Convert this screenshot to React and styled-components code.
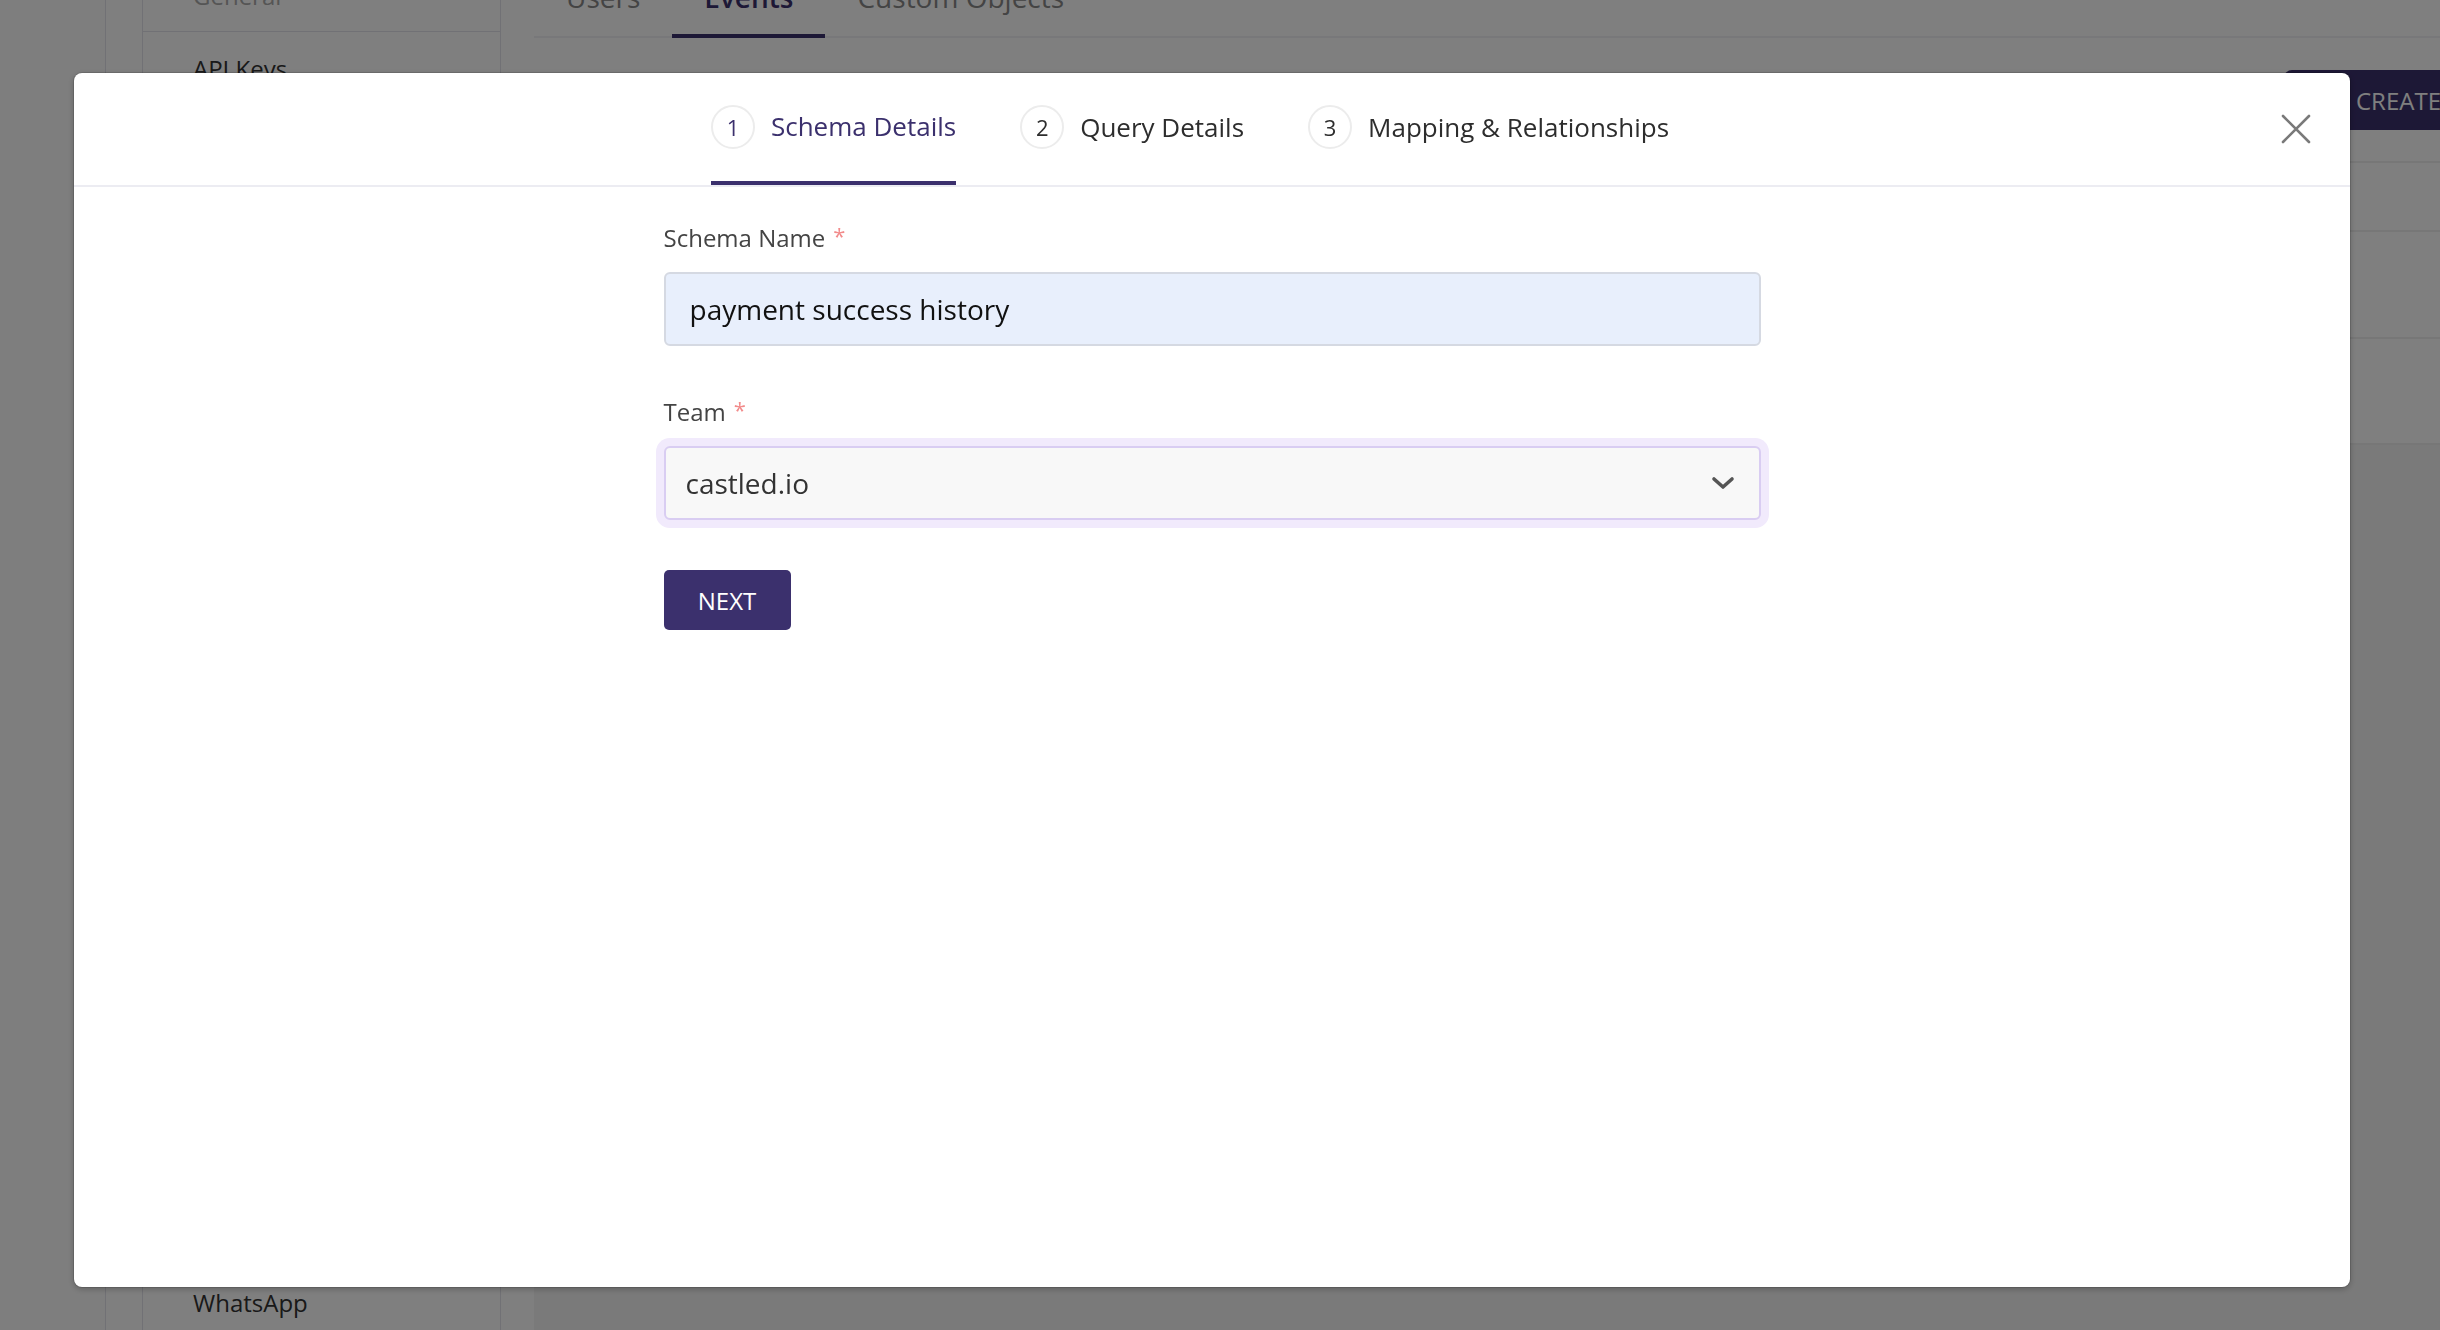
import React from 'react';
import styled, { createGlobalStyle } from 'styled-components';

const purple = '#3b306d';

const GlobalStyle = createGlobalStyle`
    html, body {
        margin: 0;
        padding: 0;
        overflow: hidden;
        background: #ffffff;
        font-family: "Open Sans", "Liberation Sans", sans-serif;
    }
    * {
        box-sizing: border-box;
    }
`;

const Page = styled.div`
    display: flex;
    height: 100vh;
    width: 100vw;
`;

const LeftNav = styled.div`
    width: 106px;
    flex-shrink: 0;
    background: #fcfcfc;
    border-right: 1px solid #e2e2ea;
`;

const Sidebar = styled.div`
    width: 359px;
    margin-left: 36px;
    flex-shrink: 0;
    display: flex;
    flex-direction: column;
    border-left: 1px solid #e2e2ea;
    border-right: 1px solid #e2e2ea;
    margin-top: -21px;
`;

const SideItem = styled.div`
    font-size: 24px;
    line-height: 34px;
    padding: ${(p) => p.$pad || '0'};
    padding-left: 50px;
    color: ${(p) => (p.$muted ? '#aaaaaa' : '#333333')};
    border-bottom: ${(p) => (p.$divider ? '1px solid #e2e2ea' : 'none')};
`;

const SideBottom = styled.div`
    margin-top: auto;
    padding-bottom: 10px;
`;

const Main = styled.div`
    flex: 1;
    display: flex;
    flex-direction: column;
    padding-left: 33px;
    margin-right: -25px;
`;

const TabRow = styled.div`
    display: flex;
    margin-top: -22px;
    border-bottom: 2px solid #f0f0f4;
`;

const PageTab = styled.div`
    font-size: 28px;
    line-height: 38px;
    padding: 0 32px 18px;
    color: ${(p) => (p.$active ? purple : '#888888')};
    font-weight: ${(p) => (p.$active ? 600 : 400)};
    border-bottom: 4px solid ${(p) => (p.$active ? purple : 'transparent')};
    margin-bottom: -2px;
`;

const Toolbar = styled.div`
    display: flex;
    justify-content: flex-end;
    align-items: flex-start;
    padding-top: 32px;
    height: 125px;
    border-bottom: 2px solid #eeeeee;
`;

const CreateButton = styled.button`
    height: 60px;
    display: flex;
    align-items: center;
    gap: 24px;
    padding: 0 24px;
    border: none;
    border-radius: 8px;
    background: ${purple};
    color: #ffffff;
    font-family: inherit;
    font-size: 24px;
`;

const Row = styled.div`
    height: ${(p) => p.$h}px;
    flex-shrink: 0;
    border-bottom: 2px solid #eeeeee;
`;

const TableRest = styled.div`
    flex: 1;
    background: #f5f5f5;
`;

const Overlay = styled.div`
    position: fixed;
    inset: 0;
    background: rgba(0, 0, 0, 0.5);
    padding: 73px 90px 43px 74px;
    display: flex;
`;

const Modal = styled.div`
    flex: 1;
    background: #ffffff;
    border-radius: 8px;
    box-shadow: 0 0 0 1px rgba(0, 0, 0, 0.12), 0 2px 6px rgba(0, 0, 0, 0.25);
    display: flex;
    flex-direction: column;
    overflow: hidden;
`;

const Header = styled.div`
    display: flex;
    align-items: stretch;
    height: 114px;
    padding: 0 32px;
    border-bottom: 2px solid #ececf2;
`;

const Steps = styled.div`
    flex: 1;
    display: flex;
    justify-content: center;
    gap: 64px;
`;

const Step = styled.div`
    display: flex;
    align-items: center;
    gap: 16px;
    border-bottom: 4px solid ${(p) => (p.$active ? purple : 'transparent')};
`;

const StepNumber = styled.div`
    width: 44px;
    height: 44px;
    border-radius: 50%;
    border: 2px solid #ececec;
    display: flex;
    align-items: center;
    justify-content: center;
    font-size: 22px;
    color: ${(p) => (p.$active ? purple : '#2d2d2d')};
`;

const StepLabel = styled.div`
    font-size: 26px;
    line-height: 36px;
    color: ${(p) => (p.$active ? purple : '#2d2d2d')};
    margin-top: ${(p) => (p.$active ? '-3px' : '0')};
`;

const CloseButton = styled.button`
    width: 44px;
    align-self: center;
    height: 44px;
    display: flex;
    align-items: center;
    justify-content: center;
    background: none;
    border: none;
    padding: 0;
    cursor: pointer;
`;

const Body = styled.div`
    width: 1097px;
    margin: 0 auto;
    padding-top: 34px;
`;

const Field = styled.div`
    margin-bottom: 49px;
`;

const Label = styled.div`
    font-size: 24px;
    line-height: 34px;
    color: #444444;
    margin-bottom: 17px;
`;

const Required = styled.span`
    color: #f28b8b;
    font-size: 22px;
    margin-left: 8px;
    vertical-align: top;
    line-height: 28px;
`;

const TextInput = styled.input`
    display: block;
    width: 100%;
    height: 74px;
    padding: 0 24px;
    border: 2px solid #d5d9e2;
    border-radius: 6px;
    background: #e8effc;
    font-family: inherit;
    font-size: 28px;
    color: #111111;
    outline: none;
`;

const Select = styled.div`
    height: 74px;
    display: flex;
    align-items: center;
    justify-content: space-between;
    padding: 0 24px 0 20px;
    border: 2px solid #d9cdf2;
    border-radius: 6px;
    background: #f8f8f8;
    box-shadow: 0 0 0 8px #f1eafc;
    font-size: 28px;
    color: #333333;
`;

const NextButton = styled.button`
    width: 127px;
    height: 60px;
    margin-top: 1px;
    border: none;
    border-radius: 5px;
    background: ${purple};
    color: #ffffff;
    font-family: inherit;
    font-size: 24px;
    cursor: pointer;
`;

const steps = [
    { n: 1, label: 'Schema Details', active: true },
    { n: 2, label: 'Query Details' },
    { n: 3, label: 'Mapping & Relationships' },
];

function Chevron() {
    return (
        <svg width="24" height="14" viewBox="0 0 24 14" fill="none">
            <path d="M3 3l9 8 9-8" stroke="#555" strokeWidth="3.6" strokeLinecap="round" strokeLinejoin="round" />
        </svg>
    );
}

function CloseIcon() {
    return (
        <svg width="30" height="30" viewBox="0 0 30 30" fill="none">
            <path d="M2 2l26 26M28 2L2 28" stroke="#7a7a7a" strokeWidth="2.6" strokeLinecap="round" />
        </svg>
    );
}

function PlusIcon() {
    return (
        <svg width="24" height="24" viewBox="0 0 24 24" fill="none">
            <path d="M12 4v16M4 12h16" stroke="#fff" strokeWidth="2.5" strokeLinecap="round" />
        </svg>
    );
}

function Background() {
    return (
        <Page>
            <LeftNav />
            <Sidebar>
                <SideItem $muted $divider $pad="0 0 18px">General</SideItem>
                <SideItem $pad="20px 0 0">API Keys</SideItem>
                <SideItem $pad="30px 0 0">Webhooks</SideItem>
                <SideBottom>
                    <SideItem>WhatsApp</SideItem>
                </SideBottom>
            </Sidebar>
            <Main>
                <TabRow>
                    <PageTab>Users</PageTab>
                    <PageTab $active>Events</PageTab>
                    <PageTab>Custom Objects</PageTab>
                </TabRow>
                <Toolbar>
                    <CreateButton>
                        <PlusIcon />
                        CREATE
                    </CreateButton>
                </Toolbar>
                <Row $h={69} />
                <Row $h={107} />
                <Row $h={106} />
                <TableRest />
            </Main>
        </Page>
    );
}

export default function App() {
    return (
        <>
            <GlobalStyle />
            <Background />
            <Overlay>
                <Modal>
                    <Header>
                        <Steps>
                            {steps.map((s) => (
                                <Step key={s.n} $active={s.active}>
                                    <StepNumber $active={s.active}>{s.n}</StepNumber>
                                    <StepLabel $active={s.active}>{s.label}</StepLabel>
                                </Step>
                            ))}
                        </Steps>
                        <CloseButton aria-label="Close">
                            <CloseIcon />
                        </CloseButton>
                    </Header>
                    <Body>
                        <Field>
                            <Label>
                                Schema Name<Required>*</Required>
                            </Label>
                            <TextInput defaultValue="payment success history" readOnly />
                        </Field>
                        <Field>
                            <Label>
                                Team<Required>*</Required>
                            </Label>
                            <Select>
                                castled.io
                                <Chevron />
                            </Select>
                        </Field>
                        <NextButton>NEXT</NextButton>
                    </Body>
                </Modal>
            </Overlay>
        </>
    );
}
